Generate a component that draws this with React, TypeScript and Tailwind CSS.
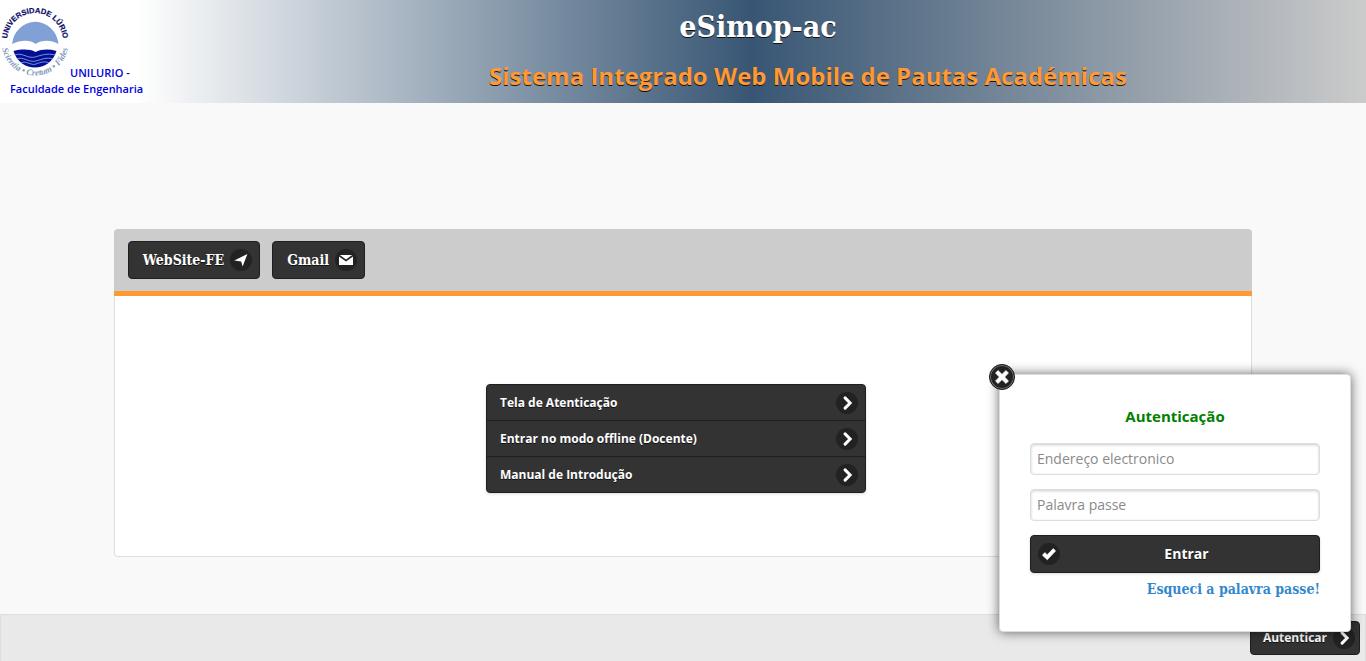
import React from 'react';

const SANS = "font-['Open_Sans','Noto_Sans',sans-serif]";
const SERIF = "font-['DejaVu_Serif_Condensed','DejaVu_Serif',serif]";
const DARK = 'border-[#1f1f1f] bg-[#333] text-white [text-shadow:0_1px_0_#111]';

type IconName = 'navigation' | 'mail' | 'chevron' | 'check' | 'close';

const SHAPES: Record<IconName, React.ReactNode> = {
  navigation: <polygon points="0.3,7.6 13.4,1 8.6,13.6 7.2,8.6" />,
  mail: (
    <>
      <path d="M0.8 2h12.4L7 6.6z" />
      <path d="M0 3.4 7 8.4 14 3.4V12H0z" />
    </>
  ),
  chevron: (
    <path d="M5.1 1.9 10.1 7 5.1 12.1" fill="none" stroke="#fff" strokeWidth="3" strokeLinecap="round" strokeLinejoin="miter" />
  ),
  check: <path d="M11.3 1.6 13.6 3.9 5.3 12.8 0.4 8.2 2.8 5.6 5.2 7.7z" stroke="#fff" strokeWidth="0.6" strokeLinejoin="round" />,
  close: (
    <polygon points="13.4,3 11,0.6 7,4.4 3,0.6 0.6,3 4.4,7 0.6,11 3,13.4 7,9.6 11,13.4 13.4,11 9.6,7" stroke="#fff" strokeWidth="0.8" strokeLinejoin="round" />
  ),
};

function Disc({ name }: { name: IconName }) {
  return (
    <span className="flex size-[22px] shrink-0 items-center justify-center rounded-full bg-[#222]">
      <svg viewBox="0 0 14 14" className="size-3.5" fill="#fff" aria-hidden="true">
        {SHAPES[name]}
      </svg>
    </span>
  );
}

function Crest() {
  return (
    <svg viewBox="0 0 70 72" className="h-[72px] w-[70px] shrink-0 overflow-visible" role="img" aria-label="Universidade Lúrio">
      <defs>
        <path id="crest-top" d="M7 34A28 28 0 0 1 63 34" />
        <path id="crest-bottom" d="M1.500 35A33.300 33.300 0 0 0 68.500 35" />
      </defs>
      <text fontSize="7.6" fontWeight="bold" fill="#0a0a66" stroke="#0a0a66" strokeWidth="0.2" fontFamily="Liberation Sans, sans-serif">
        <textPath href="#crest-top" startOffset="50%" textAnchor="middle">UNIVERSIDADE LÚRIO</textPath>
      </text>
      <text fontSize="8.8" fontStyle="italic" fill="#8199bb" fontFamily="Liberation Serif, serif">
        <textPath href="#crest-bottom" startOffset="50%" textAnchor="middle">Scientia • Cretum • Fides</textPath>
      </text>
      <path d="M12 37A23.400 25 0 0 1 58.500 37C50 32.500 42 33 35.500 37 30 32.500 21 33 12 37z" fill="#81a1d6" />
      <path d="M13.500 44C22 42 30 42 35.500 45 42 42 49 42 56.500 44 50 66 20 66 13.500 44z" fill="#000f93" />
      <g fill="none" stroke="#b9c8e8" strokeWidth="0.7">
        <path d="M15 48c7-3 13 4 20 2s12-4 20-2" />
        <path d="M17 52c6-3 12 4 19 2s11-4 17-2" />
        <path d="M21 56c5-3 10 3 15 1s9-3 13-1" />
      </g>
    </svg>
  );
}

function NavLink({ label, icon }: { label: string; icon: IconName }) {
  return (
    <a href="#" className={`flex h-[38px] items-center gap-1.5 rounded border pr-[7px] pl-3.5 text-sm font-bold ${SERIF} ${DARK}`}>
      {label}
      <Disc name={icon} />
    </a>
  );
}

function Field({ label, type }: { label: string; type: string }) {
  return (
    <input
      type={type}
      aria-label={label}
      placeholder={label}
      className="block h-8 w-full rounded border border-[#ddd] bg-white px-1.5 pb-0.5 text-sm text-[#333] shadow-[inset_0_1px_3px_rgba(0,0,0,0.2)] outline-none placeholder:text-[#8a8a8a]"
    />
  );
}

function LoginPopup() {
  return (
    <form
      onSubmit={(e) => e.preventDefault()}
      className="absolute right-[15px] bottom-[29px] w-[352px] rounded border border-[#ddd] bg-white px-[30px] pt-[29px] pb-8 shadow-[0_0_12px_rgba(0,0,0,0.6)]"
    >
      <button
        type="button"
        aria-label="Fechar"
        className="absolute -top-[11px] -left-[11px] flex size-[26px] items-center justify-center rounded-full border border-[#1a1a1a] bg-[#222] shadow-[inset_0_0_0_1px_#777]"
      >
        <svg viewBox="0 0 14 14" className="size-3.5" fill="#fff" aria-hidden="true">{SHAPES.close}</svg>
      </button>
      <h3 className="text-center text-[15px] leading-6 font-bold text-[#008000]">Autenticação</h3>
      <div className="mt-[15px] flex flex-col gap-3.5">
        <Field label="Endereço electronico" type="email" />
        <Field label="Palavra passe" type="password" />
        <button type="submit" className={`flex h-[38px] items-center rounded border pr-1.5 pl-[7px] text-sm font-bold shadow-[0_1px_3px_rgba(0,0,0,0.15)] ${DARK}`}>
          <Disc name="check" />
          <span className="flex-1 text-center">Entrar</span>
        </button>
      </div>
      <a href="#" className={`mt-1.5 block text-right text-sm font-bold text-[#3388cc] ${SERIF}`}>
        Esqueci a palavra passe!
      </a>
    </form>
  );
}

const MENU = ['Tela de Atenticação', 'Entrar no modo offline (Docente)', 'Manual de Introdução'];

export default function App() {
  return (
    <div className={`relative flex min-h-screen flex-col bg-[#f9f9f9] ${SANS}`}>
      <header className="flex h-[103px] bg-[linear-gradient(to_right,#fff_10%,#385674_55%,#cbcbcb_100%)]">
        <div className="w-[150px] shrink-0 pt-[7px] text-[11px] leading-4 font-semibold text-[#0000e0]">
          <div className="flex items-end">
            <Crest />
            <span className="-mb-0.5 whitespace-nowrap"><a href="#">UNILURIO</a> <span className="text-[#000080]">-</span></span>
          </div>
          <a href="#" className="mt-0.5 block pl-2.5 whitespace-nowrap">Faculdade de Engenharia</a>
        </div>
        <div className="flex-1 pt-[9px] text-center">
          <h1 className={`text-3xl leading-9 font-bold text-white [text-shadow:0_1px_0_#111] ${SERIF}`}>eSimop-ac</h1>
          <h2 className="mt-[13px] pl-[100px] text-2xl leading-9 font-bold text-[#ff9933] [text-shadow:0_1px_0_#111]">
            Sistema Integrado Web Mobile de Pautas Académicas
          </h2>
        </div>
      </header>

      <main className="mx-auto mt-[126px] mb-[57px] w-10/12">
        <nav className="flex gap-3 rounded-t border-b-[5px] border-[#ff9933] bg-[#ccc] px-3.5 py-3">
          <NavLink label="WebSite-FE" icon="navigation" />
          <NavLink label="Gmail" icon="mail" />
        </nav>
        <section className="rounded-b border border-t-0 border-[#ddd] bg-white pt-[88px] pr-3.5 pb-[63px]">
          <ul className={`mx-auto w-[380px] divide-y divide-[#1f1f1f] rounded border shadow-[0_1px_3px_rgba(0,0,0,0.15)] ${DARK}`}>
            {MENU.map((item) => (
              <li key={item}>
                <a href="#" className="flex h-[35px] items-center justify-between pr-[7px] pl-[13px] text-xs font-bold">
                  {item}
                  <Disc name="chevron" />
                </a>
              </li>
            ))}
          </ul>
        </section>
      </main>

      <footer className="mt-auto flex justify-end border border-b-0 border-[#ddd] bg-[#e9e9e9] px-[5px] py-1.5">
        <a href="#" className={`flex h-[34px] items-center gap-1.5 rounded border pr-1 pl-3 text-xs font-bold ${DARK}`}>
          Autenticar
          <Disc name="chevron" />
        </a>
      </footer>

      <LoginPopup />
    </div>
  );
}
